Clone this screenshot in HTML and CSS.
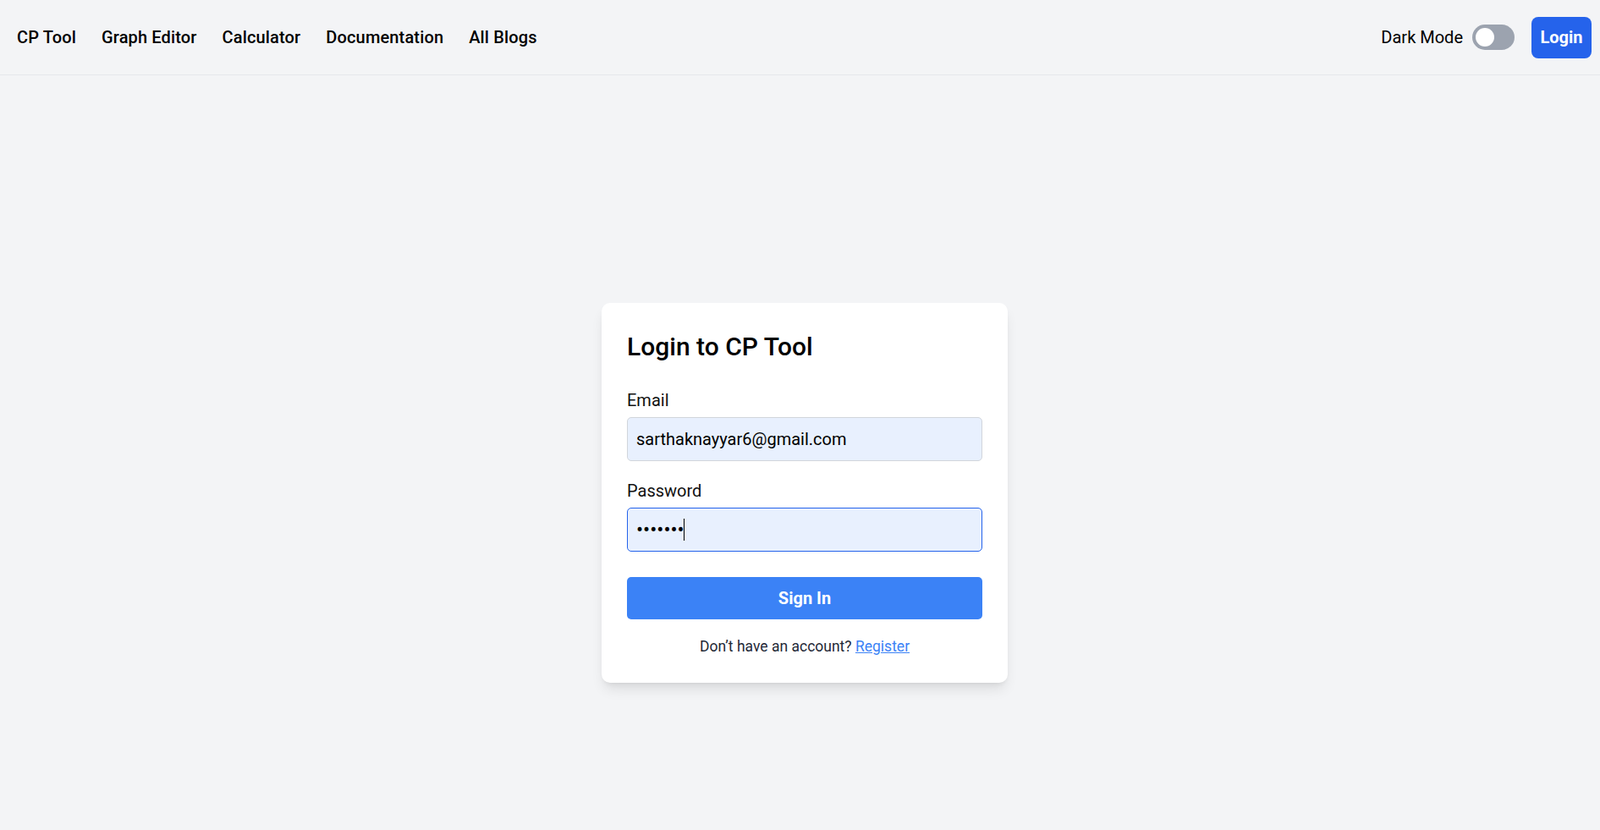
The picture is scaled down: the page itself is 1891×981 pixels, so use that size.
FILE: index.html
```html
<!DOCTYPE html>
<html lang="en">
<head>
<meta charset="utf-8">
<title>Login - CP Tool</title>
<link rel="stylesheet" href="styles.css">
</head>
<body>
<nav class="navbar">
  <div class="nav-links">
    <a class="nav-link" href="#">CP Tool</a>
    <a class="nav-link" href="#">Graph Editor</a>
    <a class="nav-link" href="#">Calculator</a>
    <a class="nav-link" href="#">Documentation</a>
    <a class="nav-link" href="#">All Blogs</a>
  </div>
  <div class="nav-right">
    <span class="dark-label">Dark Mode</span>
    <span class="toggle"><span class="knob"></span></span>
    <button class="login-btn">Login</button>
  </div>
</nav>
<main class="main">
  <form class="card">
    <h1 class="card-title">Login to CP Tool</h1>
    <div class="field">
      <label class="label" for="email">Email</label>
      <input class="input" id="email" type="email" value="sarthaknayyar6@gmail.com">
    </div>
    <div class="field field-last">
      <label class="label" for="pw">Password</label>
      <div class="input-wrap">
        <input class="input input-focus" id="pw" type="password" value="1234567">
        <span class="caret"></span>
      </div>
    </div>
    <button class="submit" type="button">Sign In</button>
    <p class="foot">Don’t have an account? <a class="link" href="#">Register</a></p>
  </form>
</main>
</body>
</html>
```

FILE: styles.css
```css
* { box-sizing: border-box; }
html, body { margin: 0; padding: 0; }
body {
  background: #f3f4f6;
  font-family: Roboto, "Noto Sans", "Liberation Sans", sans-serif;
  color: #111827;
}
.navbar {
  height: 89px;
  display: flex;
  align-items: center;
  justify-content: space-between;
  padding: 0 10px 0 20px;
  border-bottom: 1px solid #e5e7eb;
}
.nav-links { display: flex; gap: 30px; align-items: center; }
.nav-link {
  font-size: 20px;
  font-weight: 500;
  letter-spacing: 0.15px;
  color: #000;
  text-decoration: none;
  line-height: 30px;
}
.nav-right { display: flex; align-items: center; }
.dark-label { font-size: 20px; color: #000; line-height: 30px; }
.toggle {
  margin-left: 11px;
  width: 50px;
  height: 30px;
  border-radius: 15px;
  background: #9ca3af;
  display: flex;
  align-items: center;
  padding-left: 4px;
}
.knob { width: 22px; height: 22px; border-radius: 50%; background: #fff; }
.login-btn {
  margin-left: 20px;
  height: 49px;
  padding: 0 10px;
  min-width: 71px;
  border: none;
  border-radius: 8px;
  background: #2563eb;
  color: #fff;
  font-family: inherit;
  font-size: 20px;
  font-weight: 700;
}
.main {
  min-height: 981px;
  display: flex;
  align-items: center;
  justify-content: center;
  padding-top: 5px;
  padding-left: 11px;
}
.card {
  width: 480px;
  padding: 30px;
  background: #fff;
  border-radius: 10px;
  box-shadow: 0 10px 15px -3px rgba(0,0,0,0.1), 0 4px 6px -4px rgba(0,0,0,0.1);
}
.card-title {
  margin: 0 0 30px;
  font-size: 30px;
  line-height: 40px;
  padding-top: 2px;
  height: 40px;
  font-weight: 500;
  color: #000;
}
.field { margin-bottom: 20px; }
.field-last { margin-bottom: 30px; }
.label {
  display: block;
  font-size: 20px;
  line-height: 30px;
  margin-bottom: 5px;
  color: #111;
}
.input-wrap { position: relative; }
.input {
  display: block;
  width: 100%;
  height: 52px;
  padding: 0 10px;
  border: 1px solid #d1d5db;
  border-radius: 5px;
  background: #e8f0fe;
  font-family: inherit;
  font-size: 20px;
  color: #000;
  outline: none;
}
.input-focus { border-color: #2563eb; font-size: 24px; }
.caret {
  position: absolute;
  left: 67px;
  top: 13px;
  width: 1px;
  height: 26px;
  background: #000;
}
.submit {
  display: block;
  width: 100%;
  height: 50px;
  border: none;
  border-radius: 5px;
  background: #3b82f6;
  color: #fff;
  font-family: inherit;
  font-size: 20px;
  font-weight: 700;
}
.foot {
  margin: 20px 0 0;
  text-align: center;
  font-size: 17.5px;
  line-height: 25px;
  color: #1f2937;
}
.link { color: #3b82f6; text-decoration: underline; }
```
